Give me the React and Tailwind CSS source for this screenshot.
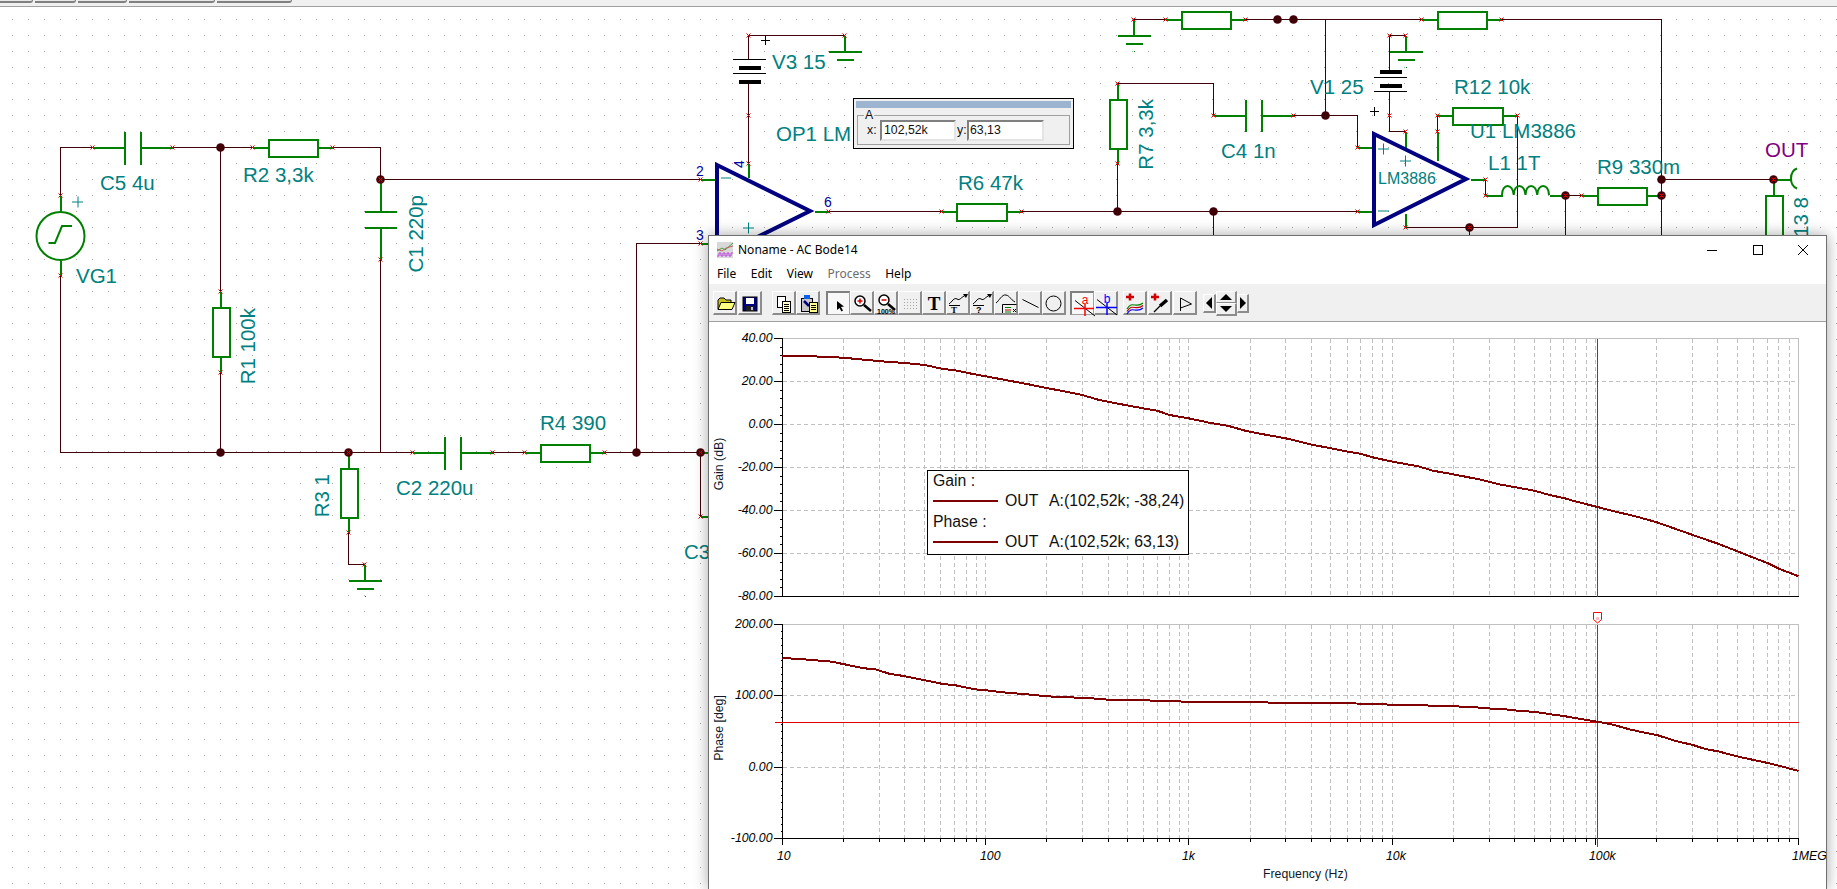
const wires = [
  '92,147 60,147 60,195',
  '60,275 60,452 412,452',
  '172,147 252,147',
  '332,147 380,147 380,179 700,179',
  '220,147 220,291',
  '220,372 220,452',
  '380,259 380,452',
  '348,532 348,564 364,564',
  '492,452 524,452',
  '604,452 700,452 700,516',
  '636,452 636,243 700,243',
  '748,35 844,35',
  '748,35 748,59',
  '748,83 748,163',
  '828,211 941,211',
  '1021,211 1357,211',
  '1117,211 1117,163',
  '1117,83 1213,83 1213,115',
  '1213,211 1213,240',
  '1133,19 1165,19',
  '1245,19 1421,19',
  '1501,19 1661,19 1661,240',
  '1325,19 1325,115',
  '1293,115 1357,115 1357,147',
  '1389,71 1389,35 1405,35',
  '1389,91 1389,131 1405,131',
  '1437,115 1437,131',
  '1517,115 1517,227 1405,227',
  '1469,227 1469,240',
  '1485,179 1485,195',
  '1565,195 1581,195',
  '1565,195 1565,240',
  '1661,179 1773,179',
]

const greens = [
  '60,195 60,212', '60,260 60,275',
  '92,147 124,147', '140,147 172,147', '124,131 124,164', '140,131 140,164',
  '252,147 268,147', '317,147 332,147',
  '380,179 380,211', '364,211 396,211', '364,227 396,227', '380,227 380,259',
  '220,291 220,307', '220,356 220,372',
  '412,452 444,452', '460,452 492,452', '444,436 444,469', '460,436 460,469',
  '524,452 540,452', '589,452 604,452',
  '348,452 348,468', '348,517 348,532',
  '700,179 716,179', '700,243 716,243', '700,516 716,516', '700,452 716,452',
  '748,163 748,177', '814,211 828,211',
  '941,211 956,211', '1006,211 1021,211',
  '1117,163 1117,148', '1117,99 1117,83',
  '1213,115 1245,115', '1261,115 1293,115', '1245,99 1245,131', '1261,99 1261,131',
  '1165,19 1181,19', '1230,19 1245,19',
  '1421,19 1437,19', '1486,19 1501,19',
  '1357,147 1373,147', '1357,211 1373,211',
  '1405,131 1405,147', '1405,213 1405,227',
  '1437,115 1452,115', '1502,115 1517,115', '1437,131 1437,160',
  '1470,179 1485,179',
  '1485,195 1502,195', '1549,195 1565,195', '1581,195 1597,195', '1646,195 1661,195',
  '1773,179 1791,179', '1773,179 1773,195',
]

const resistors = [
  [268, 139, 49, 17], [212, 307, 17, 49], [540, 444, 49, 17], [340, 468, 17, 49],
  [956, 203, 50, 17], [1109, 99, 17, 49], [1181, 11, 49, 17], [1437, 11, 49, 17],
  [1452, 107, 50, 17], [1597, 187, 49, 17], [1765, 195, 17, 60],
]

const grounds = [[364, 564], [844, 35], [1133, 19], [1405, 35]]

const marks = [
  [92, 147], [172, 147], [60, 195], [60, 275], [252, 147], [332, 147], [380, 259], [220, 291],
  [220, 372], [412, 452], [492, 452], [524, 452], [604, 452], [348, 532], [364, 564], [700, 179],
  [700, 243], [700, 516], [748, 35], [844, 35], [748, 115], [748, 163], [828, 211], [941, 211],
  [1021, 211], [1117, 83], [1117, 163], [1213, 115], [1293, 115], [1133, 19], [1165, 19],
  [1245, 19], [1421, 19], [1501, 19], [1389, 35], [1405, 35], [1389, 115], [1405, 131],
  [1357, 147], [1357, 211], [1437, 115], [1437, 131], [1517, 115], [1405, 227], [1485, 179],
  [1485, 195], [1581, 195],
]

const junctions = [
  [220, 147], [380, 179], [220, 452], [348, 452], [636, 452], [700, 452], [1117, 211], [1213, 211],
  [1277, 19], [1293, 19], [1325, 115], [1469, 227], [1565, 195], [1661, 179], [1661, 195], [1773, 179],
]

const labels = [
  ['C5 4u', 100, 190], ['R2 3,3k', 243, 182], ['VG1', 76, 283], ['R4 390', 540, 430],
  ['C2 220u', 396, 495], ['C3', 684, 559], ['V3 15', 772, 69], ['OP1 LM', 776, 141],
  ['R6 47k', 958, 190], ['C4 1n', 1221, 158], ['V1 25', 1310, 94], ['R12 10k', 1454, 94],
  ['U1 LM3886', 1470, 138], ['L1 1T', 1488, 170], ['R9 330m', 1597, 174],
]

const rotated = [
  ['C1 220p', 423, 195], ['R1 100k', 255, 308], ['R3 1', 329, 474], ['R7 3,3k', 1153, 99], ['R13 8', 1808, 197],
]

const plotL = 782
const plotR = 1798
const decade = 203.2
const gainTop = 339
const gainBottom = 597
const phaseTop = 625
const phaseBottom = 839
const gainLabels = ['40.00', '20.00', '0.00', '-20.00', '-40.00', '-60.00', '-80.00']
const phaseLabels = ['200.00', '100.00', '0.00', '-100.00']
const freqLabels = [['10', 777], ['100', 980], ['1k', 1182], ['10k', 1386], ['100k', 1589], ['1MEG', 1792]]

const logX = []
for (let d = 0; d < 5; d++) {
  for (let m = 1; m < 10; m++) {
    logX.push({ x: Math.round(plotL + decade * (d + Math.log10(m))), major: m === 1 })
  }
}
logX.push({ x: plotR, major: true })

const toPts = (rows, ox, fx, oy) => rows.map(([x, y]) => `${(ox + x / fx).toFixed(1)},${(oy + y / 3).toFixed(1)}`).join(' ')

const gainCurve =
  toPts(
    [[231, 80], [315, 82], [400, 86], [460, 92], [520, 98], [575, 102], [630, 108], [680, 120], [715, 124], [760, 134], [800, 142], [860, 154], [920, 166], [970, 177], [1020, 187], [1070, 198], [1115, 212], [1180, 226], [1240, 238], [1280, 245], [1315, 258], [1368, 268], [1430, 282], [1480, 291], [1530, 306]],
    700, 2.8, 330,
  ) +
  ' ' +
  toPts(
    [[0, 314], [70, 328], [140, 347], [190, 357], [240, 368], [273, 374], [306, 385], [360, 398], [430, 412], [470, 425], [525, 436], [600, 452], [650, 466], [745, 485], [790, 499], [825, 507], [860, 518], [917, 534], [970, 549], [1020, 562], [1078, 580], [1130, 600], [1176, 618], [1244, 644], [1300, 668], [1380, 703], [1410, 719], [1463, 742]],
    1260, 2.717, 330,
  )

const phaseCurve =
  toPts(
    [[231, 207], [290, 211], [370, 218], [400, 225], [460, 238], [490, 241], [530, 254], [575, 262], [630, 274], [680, 285], [715, 289], [770, 301], [800, 304], [860, 311], [915, 316], [970, 322], [1030, 325], [1085, 327], [1144, 332], [1228, 333], [1290, 336], [1368, 338]],
    700, 2.8, 590,
  ) +
  ' ' +
  toPts(
    [[0, 339], [30, 341], [220, 342], [360, 347], [440, 349], [525, 352], [580, 354], [610, 358], [660, 360], [700, 365], [750, 369], [790, 376], [825, 381], [860, 388], [917, 398], [960, 407], [1000, 420], [1040, 430], [1078, 438], [1130, 456], [1176, 468], [1210, 480], [1244, 487], [1300, 503], [1380, 522], [1410, 530], [1463, 546]],
    1260, 2.717, 590,
  )

function Schematic() {
  return (
    <svg viewBox="0 7 1837 882" className="block w-[1837px] h-[882px] font-['Liberation_Sans',sans-serif]">
      <defs>
        <pattern id="dots" x="12" y="19" width="16" height="16" patternUnits="userSpaceOnUse">
          <rect width="1" height="1" fill="#a8a8a8" />
        </pattern>
      </defs>
      <rect x="0" y="7" width="1837" height="882" fill="url(#dots)" />

      <g transform="translate(0.5 0.5)" fill="none" shapeRendering="crispEdges">
        {wires.map((p) => (
          <polyline key={p} points={p} stroke="#400008" strokeWidth="1" />
        ))}
        {greens.map((p) => (
          <polyline key={p} points={p} stroke="#008000" strokeWidth="2" />
        ))}
        {resistors.map(([x, y, w, h]) => (
          <rect key={x + '-' + y} x={x} y={y} width={w} height={h} fill="white" stroke="#008000" strokeWidth="2" />
        ))}
        {grounds.map(([x, y]) => (
          <g key={x} stroke="#008000">
            <line x1={x} y1={y} x2={x} y2={y + 16} strokeWidth="2" />
            <line x1={x - 16} y1={y + 16} x2={x + 17} y2={y + 16} strokeWidth="2" />
            <line x1={x - 8} y1={y + 24} x2={x + 9} y2={y + 24} strokeWidth="2" />
            <line x1={x} y1={y + 32} x2={x + 1} y2={y + 32} strokeWidth="1" />
          </g>
        ))}

        {/* batteries */}
        <g stroke="black">
          <line x1="732" y1="59" x2="765" y2="59" />
          <line x1="738" y1="67" x2="760" y2="67" strokeWidth="4" />
          <line x1="732" y1="73" x2="765" y2="73" />
          <line x1="738" y1="81" x2="760" y2="81" strokeWidth="4" />
          <line x1="1379" y1="71" x2="1401" y2="71" strokeWidth="4" />
          <line x1="1373" y1="77" x2="1406" y2="77" />
          <line x1="1379" y1="85" x2="1401" y2="85" strokeWidth="4" />
          <line x1="1373" y1="91" x2="1406" y2="91" />
          <path d="M760 40h9M764.5 35.500v9M1369 111h9M1373.500 106.500v9" />
        </g>
      </g>

      {/* source */}
      <circle cx="60.500" cy="236" r="24" fill="white" stroke="#008000" strokeWidth="2" />
      <path d="M48.500 243h6.500l7-17h10" fill="none" stroke="#008000" strokeWidth="2" />

      {/* op amps */}
      <polygon points="717,165 810,211 717,257" fill="none" stroke="#000080" strokeWidth="4" />
      <polygon points="1374,134 1466,179 1374,225" fill="none" stroke="#000080" strokeWidth="4" />

      {/* inductor and out connector */}
      <path
        d="M1502 195c0-12 11-12 11.750 0c0-12 11-12 11.750 0c0-12 11-12 11.750 0c0-12 11.750-12 11.750 0"
        fill="none"
        stroke="#008000"
        strokeWidth="2"
      />
      <path d="M1797 168.500c-8 3-8 17 0 20" fill="none" stroke="#008000" strokeWidth="2" />

      {marks.map(([x, y]) => (
        <path key={x + '-' + y} d={`M${x - 1.5} ${y - 1.5}l4 4m0-4l-4 4`} stroke="#e00000" strokeWidth="1" fill="none" />
      ))}
      {junctions.map(([x, y]) => (
        <ellipse key={x + '-' + y} cx={x + 0.5} cy={y + 0.5} rx="4.300" ry="4.300" fill="#400008" />
      ))}
      {[[380, 179], [348, 452], [700, 452], [1469, 227], [1565, 195], [1661, 195], [1773, 179]].map(([x, y]) => (
        <path key={x} d={`M${x - 1.5} ${y - 1.5}l4 4m0-4l-4 4`} stroke="#e00000" strokeWidth="1" fill="none" />
      ))}

      <g className="fill-[#008080] text-[20.5px]">
        {labels.map(([t, x, y]) => (
          <text key={t} x={x} y={y}>
            {t}
          </text>
        ))}
        {rotated.map(([t, x, y]) => (
          <text key={t} transform={`translate(${x} ${y}) rotate(-90)`} textAnchor="end">
            {t}
          </text>
        ))}
      </g>
      <text x="1765" y="157" className="fill-[#800080] text-[20.5px]">
        OUT
      </text>
      <text x="1378" y="184" className="fill-[#008080] text-[16px]">
        LM3886
      </text>
      <path
        d="M72 202h11M78 196.500v11M721 178h10M743 228h11M748.500 222.500v11M1378 149h11M1383.500 143.500v11M1400 161h11M1405.500 155.500v11M1378 211h11"
        stroke="#008080"
        strokeWidth="1"
        fill="none"
      />
      <g className="fill-[#0000a0] text-[14px]">
        <text x="696" y="176">2</text>
        <text x="696" y="240">3</text>
        <text x="824" y="207">6</text>
        <text transform="translate(744 168) rotate(-90)">4</text>
      </g>
    </svg>
  )
}

function Readout() {
  return (
    <div className="absolute left-[853px] top-[98px] w-[221px] h-[51px] border border-black bg-[#f0f0f0] px-[2px] pt-[2px] font-['Liberation_Sans',sans-serif] text-[12.3px] text-[#101010]">
      <div className="h-[7px] bg-[#9cb4d0]" />
      <div className="relative mt-[7px] ml-[1px] mr-[1px] h-[30px] border border-[#a0a0a0] flex items-center pl-[9px]">
        <span className="absolute left-[6px] -top-[8px] bg-[#f0f0f0] px-[1px] leading-[14px]">A</span>
        <span className="w-[13px]">x:</span>
        <div className="w-[76px] h-[21px] bg-white border-2 border-t-[#808080] border-l-[#808080] border-r-[#e4e4e4] border-b-[#e4e4e4] pl-[2px] leading-[17px]">
          102,52k
        </div>
        <span className="w-[11px] pl-[1px]">y:</span>
        <div className="w-[77px] h-[21px] bg-white border-2 border-t-[#808080] border-l-[#808080] border-r-[#e4e4e4] border-b-[#e4e4e4] pl-[1px] leading-[17px]">
          63,13
        </div>
      </div>
    </div>
  )
}

function Btn({ pressed, children, ml = '' }) {
  return (
    <div
      className={
        pressed
          ? `w-6 h-6 shrink-0 bg-[#f8f8f8] border-t-2 border-l-2 border-r border-b border-t-[#808080] border-l-[#808080] border-r-[#a0a0a0] border-b-[#a0a0a0] ${ml}`
          : `w-6 h-6 shrink-0 bg-[#f0f0f0] border-t border-l border-r-2 border-b-2 border-t-white border-l-white border-r-[#8c8c8c] border-b-[#8c8c8c] ${ml}`
      }
    >
      {children}
    </div>
  )
}

// icons keep a 24 box and are pulled back over the button border
function Ico({ children }) {
  return (
    <svg viewBox="0 0 24 24" className="w-6 h-6 -ml-px -mt-px overflow-visible">
      {children}
    </svg>
  )
}

function Toolbar() {
  return (
    <div className="h-[39px] shrink-0 bg-[#f0f0f0] border-t border-t-white border-b border-b-[#a0a0a0] flex pt-[7px] pl-[4px]">
      <Btn>
        <Ico>
          <path d="M5 18V9l2-2h4l2 2h5v2" fill="#c8c020" stroke="black" />
          <path d="M5 18.500l3-7h14l-3 7z" fill="#ffff80" stroke="black" />
        </Ico>
      </Btn>
      <Btn ml="ml-px">
        <Ico>
          <rect x="5" y="6" width="14" height="14" fill="#000080" stroke="black" />
          <rect x="8" y="7" width="8" height="6" fill="white" />
          <rect x="8" y="15" width="8" height="5" fill="#202020" />
          <rect x="13" y="16" width="2" height="3" fill="#c0c0c0" />
        </Ico>
      </Btn>
      <Btn ml="ml-[10px]">
        <Ico>
          <rect x="5.500" y="5.500" width="8" height="11" fill="white" stroke="black" />
          <rect x="10.500" y="10.500" width="8" height="11" fill="#ffffc8" stroke="black" />
          <path d="M12 13.500h5M12 15.500h5M12 17.500h5M12 19.500h5" stroke="black" />
        </Ico>
      </Btn>
      <Btn>
        <Ico>
          <rect x="5.500" y="7.500" width="11" height="13" fill="#c8c8c8" stroke="black" />
          <rect x="8" y="4" width="6" height="4" fill="#1060f0" />
          <rect x="13.500" y="11.500" width="8" height="10" fill="#ffff90" stroke="black" />
          <path d="M15 14.500h5M15 16.500h5M15 18.500h5" stroke="black" />
          <path d="M8 10l5 5" stroke="#000080" strokeWidth="2.500" />
        </Ico>
      </Btn>

      <Btn pressed ml="ml-[6px]">
        <Ico>
          <path d="M10 9v9l2.500-2 2 3.500 1.500-1-2-3.500 3-.5z" fill="black" />
        </Ico>
      </Btn>
      <Btn>
        <Ico>
          <circle cx="10" cy="10" r="5" fill="white" stroke="black" strokeWidth="1.500" />
          <path d="M7.500 10h5M10 7.500v5" stroke="#d00000" strokeWidth="1.500" />
          <path d="M14 14l7 6" stroke="black" strokeWidth="2.500" />
        </Ico>
      </Btn>
      <Btn>
        <Ico>
          <circle cx="10" cy="9" r="5" fill="white" stroke="black" strokeWidth="1.500" />
          <path d="M7.500 9h5" stroke="#d00000" strokeWidth="1.500" />
          <path d="M14 13l7 6" stroke="black" strokeWidth="2.500" />
          <text x="3" y="22.500" className="text-[7px] font-bold font-['Liberation_Sans',sans-serif]">
            100%
          </text>
        </Ico>
      </Btn>
      <Btn>
        <Ico>
          <g fill="#a8a8a8">
            {[8, 11, 14, 17].map((y) =>
              [6, 9, 12, 15, 18].map((x) => <rect key={x + '-' + y} x={x} y={y} width="1" height="1" />),
            )}
          </g>
        </Ico>
      </Btn>
      <Btn>
        <Ico>
          <text x="12" y="19" textAnchor="middle" className="text-[19px] font-bold font-['Liberation_Serif',serif]">
            T
          </text>
        </Ico>
      </Btn>
      <Btn>
        <Ico>
          <path d="M3 13c3-2 5-7 8-5s4-2 9-4" fill="none" stroke="black" />
          <path d="M22 3l-5 0 3 4z" fill="black" />
          <path d="M3 14.500h11" stroke="black" />
          <text x="5" y="22" className="text-[9px] font-bold font-['Liberation_Serif',serif]">
            T
          </text>
        </Ico>
      </Btn>
      <Btn>
        <Ico>
          <path d="M3 13c3-2 5-7 8-5s4-2 9-4" fill="none" stroke="black" />
          <path d="M22 3l-5 0 3 4z" fill="black" />
          <path d="M3 14.500h11" stroke="black" />
          <text x="6" y="22" className="text-[9px] font-bold font-['Liberation_Sans',sans-serif]">
            ?
          </text>
        </Ico>
      </Btn>
      <Btn>
        <Ico>
          <path d="M2 12c3-2 6-9 10-8s4 4 9 7" fill="none" stroke="black" />
          <path d="M8.500 22v-8.500h14" fill="none" stroke="black" />
          <path d="M11 16.500h6" stroke="#008000" />
          <path d="M11 19h6" stroke="#c00000" />
          <path d="M11 21h6" stroke="#008000" />
          <path d="M19 18l3 3m0-3l-3 3" stroke="black" />
        </Ico>
      </Btn>
      <Btn>
        <Ico>
          <path d="M4.500 8.500l16 8" stroke="black" />
        </Ico>
      </Btn>
      <Btn>
        <Ico>
          <circle cx="11.500" cy="12.500" r="7.500" fill="none" stroke="black" />
        </Ico>
      </Btn>

      <Btn pressed ml="ml-[4px]">
        <Ico>
          <path d="M4 8.500l20 15.500" stroke="black" />
          <path d="M3 16.500h21M14 12v12" stroke="#ff0000" strokeWidth="1.500" />
          <text x="14" y="11.500" textAnchor="middle" className="fill-[#ff0000] text-[12px] font-['Liberation_Sans',sans-serif]">
            a
          </text>
        </Ico>
      </Btn>
      <Btn>
        <Ico>
          <path d="M3 8.500l20 15.500" stroke="black" />
          <path d="M2 16.500h21M13 12v12" stroke="#0000ff" strokeWidth="1.500" />
          <text x="13" y="11.500" textAnchor="middle" className="fill-[#0000ff] text-[12px] font-['Liberation_Sans',sans-serif]">
            b
          </text>
        </Ico>
      </Btn>

      <Btn ml="ml-[5px]">
        <Ico>
          <path d="M3 6h8M7 2.500v7" stroke="#d00000" strokeWidth="2.500" />
          <path d="M4 18c5-9 9 0 16-6" fill="none" stroke="#008000" strokeWidth="1.200" />
          <path d="M4 20.500c5-9 9 0 16-6" fill="none" stroke="#c00000" strokeWidth="1.200" />
          <path d="M4 23c5-9 9 0 16-6" fill="none" stroke="#0000ff" strokeWidth="1.200" />
        </Ico>
      </Btn>
      <Btn ml="ml-px">
        <Ico>
          <path d="M3 6h8M7 2.500v7" stroke="#d00000" strokeWidth="2.500" />
          <path d="M6 21l6-6" stroke="black" strokeWidth="1.200" />
          <path d="M12 15l7-6" stroke="black" strokeWidth="3.500" />
        </Ico>
      </Btn>
      <Btn ml="ml-px">
        <Ico>
          <path d="M7.500 7v13M7.500 7l11 6-11 4" fill="none" stroke="black" />
        </Ico>
      </Btn>

      <div className="ml-[6px] flex items-center h-6">
        <div className="w-[13px] h-[19px] border-t border-l border-r-2 border-b-2 border-t-white border-l-white border-r-[#8c8c8c] border-b-[#8c8c8c] flex items-center justify-center">
          <div className="w-0 h-0 border-y-[6px] border-y-transparent border-r-[6px] border-r-black" />
        </div>
        <div className="w-[21px] h-[25px] flex flex-col">
          <div className="flex-1 border-t border-l border-r-2 border-b border-t-white border-l-white border-r-[#8c8c8c] border-b-[#8c8c8c] flex items-center justify-center">
            <div className="w-0 h-0 border-x-[6px] border-x-transparent border-b-[6px] border-b-black" />
          </div>
          <div className="flex-1 border-t border-l border-r-2 border-b-2 border-t-white border-l-white border-r-[#8c8c8c] border-b-[#8c8c8c] flex items-center justify-center">
            <div className="w-0 h-0 border-x-[6px] border-x-transparent border-t-[6px] border-t-black" />
          </div>
        </div>
        <div className="w-[12px] h-[19px] border-t border-l border-r-2 border-b-2 border-t-white border-l-white border-r-[#8c8c8c] border-b-[#8c8c8c] flex items-center justify-center">
          <div className="w-0 h-0 border-y-[6px] border-y-transparent border-l-[6px] border-l-black" />
        </div>
      </div>
    </div>
  )
}

function Plot({ top, bottom, count, minor, minorLen }) {
  const step = (bottom - top) / count
  const rows = []
  for (let i = 0; i <= count * minor; i++) rows.push(top + (i * step) / minor)
  return (
    <g transform="translate(0.5 0.5)" shapeRendering="crispEdges">
      {logX.slice(1, -1).map((l) => (
        <line key={l.x} x1={l.x} y1={top} x2={l.x} y2={bottom} stroke="#c0c0c0" strokeDasharray="4 3" />
      ))}
      {Array.from({ length: count - 1 }, (_, i) => top + (i + 1) * step).map((y) => (
        <line key={y} x1={plotL} y1={Math.round(y)} x2={plotR} y2={Math.round(y)} stroke="#c0c0c0" strokeDasharray="4 3" />
      ))}
      <line x1={plotL} y1={top} x2={plotR} y2={top} stroke="#c0c0c0" />
      <line x1={plotR} y1={top} x2={plotR} y2={bottom} stroke="#c0c0c0" />
      <line x1={plotL} y1={top} x2={plotL} y2={bottom} stroke="black" />
      <line x1={plotL} y1={bottom} x2={plotR} y2={bottom} stroke="black" />
      {rows.map((y, i) => (
        <line
          key={y}
          x1={i % minor === 0 ? plotL - 9 : plotL - minorLen}
          y1={Math.round(y)}
          x2={plotL}
          y2={Math.round(y)}
          stroke="black"
        />
      ))}
    </g>
  )
}

function Chart() {
  const gainStep = (gainBottom - gainTop) / 6
  const phaseStep = (phaseBottom - phaseTop) / 3
  return (
    <svg viewBox="709 323 1117 566" className="block w-[1117px] h-[566px] font-['Liberation_Sans',sans-serif]">
      <Plot top={gainTop} bottom={gainBottom} count={6} minor={5} minorLen={3} />
      <Plot top={phaseTop} bottom={phaseBottom} count={3} minor={10} minorLen={2} />

      <g transform="translate(0.5 0.5)" shapeRendering="crispEdges">
        {logX.map((l) => (
          <line key={l.x} x1={l.x} y1={phaseBottom} x2={l.x} y2={phaseBottom + (l.major ? 6 : 3)} stroke="black" />
        ))}
        <line x1="774" y1="723" x2={plotR} y2="723" stroke="#e00000" />
        <line x1="1597" y1={gainTop} x2="1597" y2={gainBottom} stroke="#ff0000" />
        <line x1="1597" y1={phaseTop} x2="1597" y2="847" stroke="#ff0000" />
      </g>

      <polyline points={gainCurve} fill="none" stroke="#800000" strokeWidth="2" shapeRendering="crispEdges" />
      <polyline points={phaseCurve} fill="none" stroke="#800000" strokeWidth="2" shapeRendering="crispEdges" />

      <path d="M1593.500 613.500h8v7l-4 3.500-4-3.500z" fill="white" stroke="#ff0000" />
      <text x="1597.500" y="621" textAnchor="middle" className="fill-[#ff8080] text-[6px]">
        a
      </text>

      <g className="text-[12.3px] italic">
        {gainLabels.map((t, i) => (
          <text key={t} x="772.500" y={gainTop + i * gainStep + 4} textAnchor="end">
            {t}
          </text>
        ))}
        {phaseLabels.map((t, i) => (
          <text key={t} x="772.500" y={phaseTop + i * phaseStep + 4} textAnchor="end">
            {t}
          </text>
        ))}
        {freqLabels.map(([t, x]) => (
          <text key={t} x={x} y="861">
            {t}
          </text>
        ))}
      </g>
      <g className="text-[12.300px] fill-[#101828]">
        <text transform="translate(723 465) rotate(-90)" textAnchor="middle">
          Gain (dB)
        </text>
        <text transform="translate(723 729) rotate(-90)" textAnchor="middle">
          Phase [deg]
        </text>
        <text x="1263" y="879">
          Frequency (Hz)
        </text>
      </g>
    </svg>
  )
}

function Legend() {
  return (
    <div className="absolute left-[218px] top-[148px] w-[262px] h-[85px] bg-white border border-black pl-[5px] font-['Liberation_Sans',sans-serif] text-[15.800px] leading-[20px] text-[#101010] whitespace-nowrap">
      <div className="h-[20px]">Gain :</div>
      <div className="h-[20px] flex items-center">
        <div className="w-[65px] h-[2px] bg-[#800000]" />
        <span className="ml-[7px] w-[44px]">OUT</span>
        <span>A:(102,52k; -38,24)</span>
      </div>
      <div className="h-[20px] mt-px">Phase :</div>
      <div className="h-[20px] flex items-center">
        <div className="w-[65px] h-[2px] bg-[#800000]" />
        <span className="ml-[7px] w-[44px]">OUT</span>
        <span>A:(102,52k; 63,13)</span>
      </div>
    </div>
  )
}

function BodeWindow() {
  return (
    <div className="absolute left-[708px] top-[235px] w-[1119px] bottom-0 bg-white border-t border-x border-[#707070] shadow-[0_0_14px_rgba(0,0,0,0.35)] flex flex-col font-['Noto_Sans',sans-serif] text-[12px] text-black">
      <div className="h-[26px] shrink-0 flex items-center pl-[8px] pt-[2px]">
        <svg viewBox="0 0 16 16" className="w-4 h-4 shrink-0">
          <rect width="16" height="16" fill="#d8d8d8" />
          <path d="M0 9l5-3 3 2 8-7" fill="none" stroke="#40a040" />
          <path d="M0 7l5 2 4-3 7-2" fill="none" stroke="#c06060" />
          <path d="M0 14h2v-3h2v3h2v-3h2v3h2v-3h2v3h2v-3h2" fill="none" stroke="#c040e0" />
        </svg>
        <span className="ml-[5px]">Noname - AC Bode14</span>
        <div className="ml-auto flex h-full">
          <div className="w-[45.5px] flex items-center justify-center">
            <div className="w-[10px] h-px bg-black" />
          </div>
          <div className="w-[45.5px] flex items-center justify-center">
            <div className="w-[10px] h-[10px] border border-black" />
          </div>
          <div className="w-[45.5px] flex items-center justify-center">
            <svg viewBox="0 0 10 10" className="w-[10px] h-[10px]">
              <path d="M0 0l10 10M10 0L0 10" stroke="black" fill="none" />
            </svg>
          </div>
        </div>
      </div>
      <div className="h-[21px] shrink-0 flex items-center pl-[8px] gap-[14.500px] pt-[3px]">
        <span>File</span>
        <span>Edit</span>
        <span>View</span>
        <span className="text-[#6d6d6d]">Process</span>
        <span>Help</span>
      </div>
      <Toolbar />
      <div className="relative flex-1 min-h-0">
        <Chart />
        <Legend />
      </div>
    </div>
  )
}

export default function App() {
  const tabs = ['w-[33px]', 'w-[41px]', 'w-[49px]', 'w-[86px]', 'w-[75px]']
  return (
    <div className="relative w-[1837px] h-[889px] overflow-hidden bg-white flex flex-col">
      <div className="h-[7px] shrink-0 bg-[#f0f0f0] border-b border-b-[#a0a0a0] flex gap-[2px]">
        {tabs.map((w) => (
          <div key={w} className={`${w} h-[3px] bg-[#e8e8e8] border-b-2 border-r border-[#808080] rounded-br-sm`} />
        ))}
      </div>
      <Schematic />
      <Readout />
      <BodeWindow />
    </div>
  )
}
